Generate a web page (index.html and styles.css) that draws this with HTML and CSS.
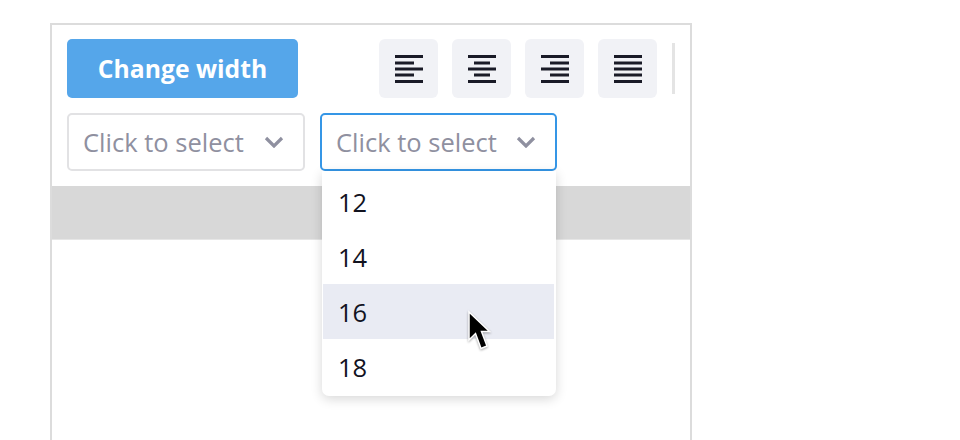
FILE: index.html
```html
<!DOCTYPE html>
<html lang="en">
<head>
    <meta charset="UTF-8">
    <title>Table toolbar</title>
    <link rel="stylesheet" href="styles.css">
</head>
<body>
<div class="frame">
    <div class="toolbar">
        <button class="primary" type="button">Change width</button>
        <div class="aligns">
            <button class="align" type="button" aria-label="Align left">
                <svg width="28" height="28" viewBox="0 0 28 28"><path d="M0 1.500h28M0 8h19M0 14h28M0 20h19M0 26.500h28"/></svg>
            </button>
            <button class="align" type="button" aria-label="Align center">
                <svg width="28" height="28" viewBox="0 0 28 28"><path d="M0 1.500h28M6 8h16M0 14h28M6 20h16M0 26.500h28"/></svg>
            </button>
            <button class="align" type="button" aria-label="Align right">
                <svg width="28" height="28" viewBox="0 0 28 28"><path d="M0 1.500h28M9 8h19M0 14h28M9 20h19M0 26.500h28"/></svg>
            </button>
            <button class="align" type="button" aria-label="Justify">
                <svg width="28" height="28" viewBox="0 0 28 28"><path d="M0 1.500h28M0 8h28M0 14h28M0 20h28M0 26.500h28"/></svg>
            </button>
            <span class="divider"></span>
        </div>
    </div>
    <div class="selects">
        <div class="select">
            <span>Click to select</span>
            <svg class="chevron" width="20" height="12" viewBox="0 0 20 12"><path d="M2 2l8 8 8-8"/></svg>
        </div>
        <div class="select select-open">
            <span>Click to select</span>
            <svg class="chevron" width="20" height="12" viewBox="0 0 20 12"><path d="M2 2l8 8 8-8"/></svg>
            <ul class="menu">
                <li>12</li>
                <li>14</li>
                <li class="hover">16</li>
                <li>18</li>
            </ul>
            <svg class="cursor" width="30" height="44" viewBox="0 0 30 44"><path d="M2 2v28l6.500-6.500 5.500 15 6-2.500-5.500-14.500h8z"/></svg>
        </div>
    </div>
    <div class="header-bar"></div>
</div>
</body>
</html>
```

FILE: styles.css
```css
html, body{
    margin: 0;
    height: 100%;
    overflow: hidden;
    background-color: #ffffff;
    font-family: "Open Sans", "Liberation Sans", sans-serif;
}
.frame{
    box-sizing: border-box;
    width: 642px;
    height: 417px;
    margin: 23px 0 0 50px;
    border: 2px solid #dcdcdc;
    border-bottom: none;
}
.toolbar{
    display: flex;
    padding: 14px 15px 0;
}
.primary{
    width: 231px;
    height: 59px;
    padding: 0;
    border: none;
    border-radius: 5px;
    background-color: #55a6ea;
    color: #ffffff;
    font-family: inherit;
    font-size: 24.700px;
    font-weight: 700;
}
.aligns{
    display: flex;
    margin-left: 81px;
    gap: 14px;
}
.align{
    display: flex;
    align-items: center;
    justify-content: center;
    width: 59px;
    height: 59px;
    padding: 0;
    border: none;
    border-radius: 6px;
    background-color: #f1f2f6;
}
.align path{
    fill: none;
    stroke: #1a1b27;
    stroke-width: 3;
}
.divider{
    width: 3px;
    height: 51px;
    margin: 4px 0 0 1px;
    background-color: #e4e4e4;
}
.selects{
    display: flex;
    gap: 15px;
    padding: 15px 15px 0;
}
.select{
    position: relative;
    box-sizing: border-box;
    display: flex;
    align-items: center;
    justify-content: space-between;
    width: 238px;
    height: 58px;
    padding: 0 19px 0 14px;
    border: 2px solid #e2e2e4;
    border-radius: 5px;
    color: #8f90a0;
    font-size: 25.500px;
}
.select-open{
    width: 237px;
    border-color: #3596e6;
}
.chevron path{
    fill: none;
    stroke: #8f90a0;
    stroke-width: 3.200;
}
.menu{
    position: absolute;
    top: 56px;
    left: 0;
    width: 234px;
    margin: 0;
    padding: 3px 2px 2px 1px;
    box-sizing: border-box;
    list-style: none;
    background-color: #ffffff;
    border-radius: 0 0 7px 7px;
    box-shadow: 0 3px 12px rgba(0, 0, 0, 0.16);
    color: #12131f;
}
.menu li{
    height: 55px;
    padding-left: 15px;
    line-height: 57px;
}
.menu .hover{
    background-color: #e9ebf3;
}
.cursor{
    position: absolute;
    top: 195px;
    left: 145px;
    filter: drop-shadow(0 1px 1px rgba(0, 0, 0, 0.35));
}
.cursor path{
    fill: #000000;
    stroke: #ffffff;
    stroke-width: 1.500;
}
.header-bar{
    height: 53px;
    margin-top: 15px;
    background-color: #d8d8d8;
    border-bottom: 1px solid #e6e6e6;
}
```
